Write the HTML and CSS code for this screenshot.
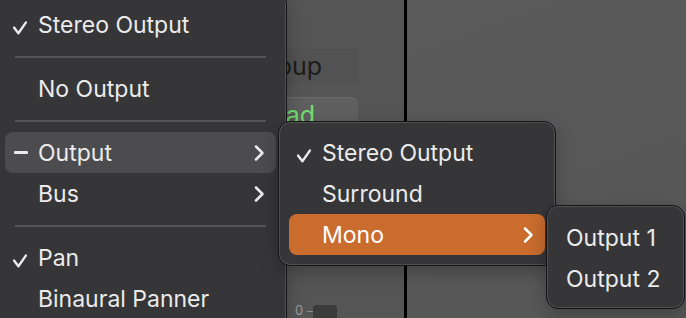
FILE: index.html
```html
<!DOCTYPE html>
<html lang="en">
<head>
    <meta charset="UTF-8">
    <meta name="viewport" content="width=device-width, initial-scale=1.0">
    <title>Output Menu</title>
    <link rel="stylesheet" href="styles.css">
</head>
<body>
    <div class="stage">
        <!-- Channel strip behind the menus -->
        <div class="strip">
            <div class="field">Group</div>
            <div class="read-btn">Read</div>
            <div class="meter">
                <span class="meter-label">0</span>
                <span class="meter-tick"></span>
                <span class="meter-knob"></span>
            </div>
        </div>
        <div class="divider"></div>
        <div class="canvas"></div>

        <!-- Main context menu -->
        <div class="menu main-menu">
            <div class="item">
                <span class="mark"><svg class="check" viewBox="0 0 14 20" width="14" height="20"><path d="M1 12.6 L5.4 18.3 L13 7.4"/></svg></span>
                <span class="label">Stereo Output</span>
            </div>
            <div class="sep"></div>
            <div class="item">
                <span class="mark"></span>
                <span class="label">No Output</span>
            </div>
            <div class="sep"></div>
            <div class="item hover">
                <span class="mark"><span class="dash"></span></span>
                <span class="label">Output</span>
                <svg class="chev" viewBox="0 0 12 18" width="12" height="18"><polyline points="3,2.5 9.5,9 3,15.5"/></svg>
            </div>
            <div class="item">
                <span class="mark"></span>
                <span class="label">Bus</span>
                <svg class="chev" viewBox="0 0 12 18" width="12" height="18"><polyline points="3,2.5 9.5,9 3,15.5"/></svg>
            </div>
            <div class="sep"></div>
            <div class="item">
                <span class="mark"><svg class="check" viewBox="0 0 14 20" width="14" height="20"><path d="M1 12.6 L5.4 18.3 L13 7.4"/></svg></span>
                <span class="label">Pan</span>
            </div>
            <div class="item">
                <span class="mark"></span>
                <span class="label">Binaural Panner</span>
            </div>
        </div>

        <!-- Output submenu -->
        <div class="menu sub-menu">
            <div class="item">
                <span class="mark"><svg class="check" viewBox="0 0 14 20" width="14" height="20"><path d="M1 12.6 L5.4 18.3 L13 7.4"/></svg></span>
                <span class="label">Stereo Output</span>
            </div>
            <div class="item">
                <span class="mark"></span>
                <span class="label">Surround</span>
            </div>
            <div class="item active">
                <span class="mark"></span>
                <span class="label">Mono</span>
                <svg class="chev" viewBox="0 0 12 18" width="12" height="18"><polyline points="3,2.5 9.5,9 3,15.5"/></svg>
            </div>
        </div>

        <!-- Mono submenu -->
        <div class="menu mono-menu">
            <div class="item plain">
                <span class="label">Output 1</span>
            </div>
            <div class="item plain">
                <span class="label">Output 2</span>
            </div>
        </div>
    </div>
</body>
</html>
```

FILE: styles.css
```css
* {
    margin: 0;
    padding: 0;
    box-sizing: border-box;
    font-family: 'Inter', 'Liberation Sans', sans-serif;
}

:root {
    --menu-bg: #363638;
    --menu-text: #ebebeb;
    --hover-bg: #4c4c4e;
    --accent: #c96c2e;
    --panel: #5a5a5a;
}

body {
    background-color: var(--panel);
    overflow: hidden;
}

.stage {
    position: relative;
    width: 686px;
    height: 318px;
    display: flex;
    overflow: hidden;
    background: linear-gradient(160deg, #5b5b5b, #575757);
}

/* channel strip */
.strip {
    width: 404px;
    height: 100%;
    display: flex;
    flex-direction: column;
    align-items: flex-end;
    padding: 49px 46px 0 0;
    background-color: #555;
}

.field {
    width: 160px;
    height: 35px;
    background-color: #525252;
    border-radius: 4px;
    color: #1c1c1c;
    font-size: 25px;
    line-height: 35px;
    text-align: right;
    padding-right: 36px;
}

.read-btn {
    width: 160px;
    height: 42px;
    margin-top: 13px;
    background-color: #5f5f5f;
    border-top: 1px solid #6c6c6c;
    border-radius: 8px 8px 0 0;
    color: #72e06f;
    font-size: 25px;
    line-height: 34px;
    text-align: right;
    padding-right: 43px;
}

.meter {
    align-self: flex-start;
    margin-top: auto;
    margin-left: 295px;
    margin-bottom: -6px;
    display: flex;
    align-items: flex-start;
    height: 19px;
}

.meter-label {
    color: #9c9c9c;
    font-size: 13px;
    line-height: 11px;
}

.meter-tick {
    width: 6px;
    height: 1px;
    background-color: #8a8a8a;
    margin: 6px 0 0 4px;
}

.meter-knob {
    width: 24px;
    height: 19px;
    background-color: #3b3b3b;
    border-radius: 4px;
}

.divider {
    width: 3px;
    height: 100%;
    background-color: #000;
}

.canvas {
    flex: 1;
}

/* menus */
.menu {
    position: absolute;
    background-color: var(--menu-bg);
    border: 1px solid #151515;
    border-radius: 12px;
    box-shadow: inset 0 0 0 1px rgba(255, 255, 255, 0.13), 0 6px 18px rgba(0, 0, 0, 0.25);
    padding: 10px;
    display: flex;
    flex-direction: column;
}

.main-menu {
    left: -6px;
    top: -8px;
    width: 293px;
    height: 340px;
    padding-top: 11px;
}

.sub-menu {
    left: 278px;
    top: 121px;
    width: 278px;
    height: 145px;
}

.mono-menu {
    left: 546px;
    top: 205px;
    width: 139px;
    height: 104px;
    padding: 11px 10px 9px;
}

.item {
    height: 41px;
    display: flex;
    align-items: center;
    border-radius: 8px;
    color: var(--menu-text);
    font-size: 23px;
    flex-shrink: 0;
}

.item.hover {
    background-color: var(--hover-bg);
}

.item.active {
    background-color: var(--accent);
    color: #fff;
}

.item.plain {
    padding-left: 9px;
}

.mark {
    width: 33px;
    height: 100%;
    display: flex;
    align-items: center;
    padding-left: 8px;
    flex-shrink: 0;
}

.check {
    fill: none;
    stroke: var(--menu-text);
    stroke-width: 2.4;
    stroke-linecap: round;
    stroke-linejoin: round;
}

.dash {
    width: 14px;
    height: 3px;
    margin-left: 1px;
    background-color: var(--menu-text);
    border-radius: 1px;
}

.label {
    flex: 1;
    white-space: nowrap;
}

.chev {
    margin-right: 11px;
    fill: none;
    stroke: var(--menu-text);
    stroke-width: 2.5;
    stroke-linecap: round;
    stroke-linejoin: round;
}

.item.active .chev {
    stroke: #fff;
}

.sep {
    height: 23px;
    display: flex;
    align-items: center;
    padding: 0 10px;
    flex-shrink: 0;
}

.sep::before {
    content: '';
    flex: 1;
    height: 2px;
    background-color: #555557;
}
```
